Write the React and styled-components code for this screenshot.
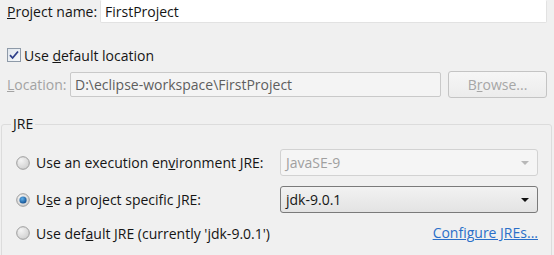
import React from 'react';
import styled, { createGlobalStyle } from 'styled-components';

const GlobalStyle = createGlobalStyle`
    html, body {
        margin: 0;
        padding: 0;
        background: #f0f0f0;
    }
    body {
        font-family: "Open Sans", "Noto Sans", sans-serif;
        font-size: 14px;
        color: #151515;
    }
`

const Page = styled.div`
    width: 554px;
    height: 255px;
    overflow: hidden;
    padding: 0 7px;
    box-sizing: border-box;
`

const Row = styled.div`
    display: flex;
    align-items: center;
    height: ${props => props.h || 20}px;
    margin-top: ${props => props.top || 0}px;
    gap: ${props => props.gap || 0}px;
`

const Label = styled.label`
    width: ${props => props.w}px;
    flex-shrink: 0;
    color: ${props => props.disabled ? '#a3a3a3' : '#151515'};
    white-space: nowrap;
`

const TextInput = styled.div`
    flex: 1;
    height: ${props => props.h || 25}px;
    box-sizing: border-box;
    display: flex;
    align-items: center;
    padding-left: 4px;
    background: ${props => props.disabled ? '#f4f4f4' : '#ffffff'};
    border: 1px solid ${props => props.disabled ? '#c9c9c9' : '#e2e2e2'};
    border-top-color: ${props => props.disabled ? '#c9c9c9' : 'transparent'};
    border-radius: 2px;
    color: ${props => props.disabled ? '#5e5e5e' : '#151515'};
    white-space: nowrap;
    overflow: hidden;
`

const Button = styled.div`
    width: 99px;
    height: 27px;
    box-sizing: border-box;
    display: flex;
    align-items: center;
    justify-content: center;
    border: 1px solid #c4c4c4;
    border-radius: 3px;
    background: linear-gradient(#f6f6f6, #ececec);
    color: #a6a6a6;
`

const CheckLabel = styled.span`
    margin-left: 3px;
    white-space: nowrap;
`

const Group = styled.fieldset`
    margin: 16px -5px 0 -6px;
    padding: 15px 13px 20px 14px;
    border: 1px solid #dcdcdc;
    border-radius: 3px;
    display: grid;
    grid-template-columns: minmax(0, 1fr) 258px;
    grid-template-rows: 27px 27px 20px;
    row-gap: 10px;
    align-items: center;
`

const Legend = styled.legend`
    margin-left: -5px;
    padding: 0 2px;
    line-height: 20px;
`

const RadioRow = styled.div`
    display: flex;
    align-items: center;
    gap: 6px;
    white-space: nowrap;
`

const Combo = styled.div`
    height: 27px;
    box-sizing: border-box;
    display: flex;
    align-items: center;
    justify-content: space-between;
    padding: 0 8px 0 5px;
    border-radius: 3px;
    border: 1px solid ${props => props.disabled ? '#d2d2d2' : '#7a7a7a'};
    background: ${props => props.disabled ? '#f5f5f5' : 'linear-gradient(#f2f2f2, #e3e3e3)'};
    color: ${props => props.disabled ? '#a0a0a0' : '#151515'};
`

const Arrow = styled.span`
    width: 0;
    height: 0;
    border-left: 4px solid transparent;
    border-right: 4px solid transparent;
    border-top: 4px solid ${props => props.disabled ? '#b8b8b8' : '#111'};
`

const Link = styled.a`
    justify-self: end;
    color: #2a6fc9;
    text-decoration: underline;
    white-space: nowrap;
    line-height: 20px;
`

const Checkbox = () => (
    <svg width="14" height="14" viewBox="0 0 14 14">
        <defs>
            <linearGradient id="cbg" x1="0" y1="0" x2="1" y2="1">
                <stop offset="0" stopColor="#dfe6ee" />
                <stop offset="1" stopColor="#f7f9fb" />
            </linearGradient>
        </defs>
        <rect x="0.5" y="0.5" width="13" height="13" fill="url(#cbg)" stroke="#8e9aa8" />
        <path d="M3 7.2 L5.6 10 L11 3.5" fill="none" stroke="#2e3f8a" strokeWidth="1.8" />
    </svg>
)

const Radio = ({ checked }) => (
    <svg width="14" height="14" viewBox="0 0 14 14">
        <defs>
            <radialGradient id="rbg" cx="0.35" cy="0.3" r="0.8">
                <stop offset="0" stopColor="#f4f4f4" />
                <stop offset="1" stopColor="#cdcdcd" />
            </radialGradient>
            <radialGradient id="rdot" cx="0.4" cy="0.35" r="0.7">
                <stop offset="0" stopColor="#5fb0ea" />
                <stop offset="1" stopColor="#0d4a8c" />
            </radialGradient>
        </defs>
        <circle cx="7" cy="7" r="6.3" fill="url(#rbg)" stroke="#9c9c9c" />
        {checked && <circle cx="7" cy="7" r="3.6" fill="url(#rdot)" />}
    </svg>
)

export default function App() {
    return (
        <Page>
            <GlobalStyle />
            <Row h={23}>
                <Label w={93}><u>P</u>roject name:</Label>
                <TextInput h={23}>FirstProject</TextInput>
            </Row>
            <Row h={20} top={45 - 23}>
                <Checkbox />
                <CheckLabel>Use <u>d</u>efault location</CheckLabel>
            </Row>
            <Row h={27} top={6} gap={7}>
                <Label w={56} disabled><u>L</u>ocation:</Label>
                <TextInput disabled>D:\eclipse-workspace\FirstProject</TextInput>
                <Button>B<u>r</u>owse...</Button>
            </Row>
            <Group>
                <Legend>JRE</Legend>
                <RadioRow>
                    <Radio />
                    <span>Use an execution en<u>v</u>ironment JRE:</span>
                </RadioRow>
                <Combo disabled>JavaSE-9<Arrow disabled /></Combo>
                <RadioRow>
                    <Radio checked />
                    <span>U<u>s</u>e a project specific JRE:</span>
                </RadioRow>
                <Combo>jdk-9.0.1<Arrow /></Combo>
                <RadioRow>
                    <Radio />
                    <span>Use def<u>a</u>ult JRE (currently 'jdk-9.0.1')</span>
                </RadioRow>
                <Link href="#">Configure JREs...</Link>
            </Group>
        </Page>
    );
}
